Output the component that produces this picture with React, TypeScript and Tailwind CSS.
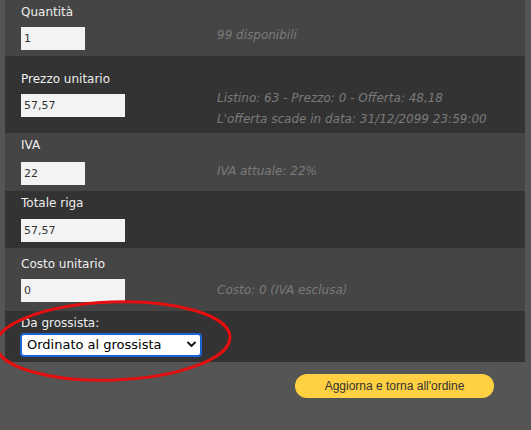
import { useState } from 'react';

type Row = {
  label: string;
  value: string;
  width: string;
  bg: string;
  pad: string;
  gap: string;
  notes?: string[];
  noteShift?: string;
};

const rows: Row[] = [
  { label: 'Quantità', value: '1', width: 'w-[64px]', bg: 'bg-[#454545]', pad: 'pt-[4px] pb-[6px]', gap: 'mt-[7px]', notes: ['99 disponibili'], noteShift: 'mb-[7px]' },
  {
    label: 'Prezzo unitario', value: '57,57', width: 'w-[104px]', bg: 'bg-[#333333]', pad: 'pt-[15px] pb-[16px]', gap: 'mt-[7px]',
    notes: ['Listino: 63 - Prezzo: 0 - Offerta: 48,18', "L'offerta scade in data: 31/12/2099 23:59:00"], noteShift: 'mt-[6px]',
  },
  { label: 'IVA', value: '22', width: 'w-[64px]', bg: 'bg-[#454545]', pad: 'pt-[4px] pb-[6px]', gap: 'mt-[9px]', notes: ['IVA attuale: 22%'], noteShift: 'mb-[5px]' },
  { label: 'Totale riga', value: '57,57', width: 'w-[104px]', bg: 'bg-[#333333]', pad: 'pt-[4px] pb-[6px]', gap: 'mt-[8px]' },
  { label: 'Costo unitario', value: '0', width: 'w-[104px]', bg: 'bg-[#454545]', pad: 'pt-[8px] pb-[9px]', gap: 'mt-[7px]', notes: ['Costo: 0 (IVA esclusa)'], noteShift: 'mb-[1px]' },
];

export default function App() {
  const [stato, setStato] = useState('ordinato');

  return (
    <div className="relative w-[531px] h-[430px] overflow-hidden bg-[#555555] font-['DejaVu_Sans',Verdana,sans-serif]">
      <div className="mx-[5px] w-[520px]">
        {rows.map((r) => (
          <div key={r.label} className={`${r.bg} ${r.pad} px-4`}>
            <div className="text-[12px] leading-[16px] text-[#eeeeee]">{r.label}</div>
            <div className={`flex items-center h-[23px] ${r.gap}`}>
              <div className="w-[196px] shrink-0">
                <input
                  defaultValue={r.value}
                  className={`block ${r.width} h-[23px] bg-[#f3f3f3] text-[#333] text-[11px] px-[3px] outline-none border-0`}
                />
              </div>
              {r.notes && (
                <div className={`${r.noteShift} shrink-0 italic text-[12px] leading-[21px] text-[#7a7a7a] whitespace-nowrap`}>
                  {r.notes.map((n) => (
                    <div key={n}>{n}</div>
                  ))}
                </div>
              )}
            </div>
          </div>
        ))}

        <div className="bg-[#333333] pt-[4px] pb-[5px] px-4">
          <div className="text-[12px] leading-[16px] text-[#eeeeee]">Da grossista:</div>
          <div className="relative mt-[2px] w-[182px] -ml-px">
            <select
              value={stato}
              onChange={(e) => setStato(e.target.value)}
              className="block appearance-none w-[182px] h-[24px] bg-white text-black text-[13px] leading-[20px] pl-[5px] pr-6 border-2 border-[#1b64d8] rounded-[4px] outline-none"
            >
              <option value="ordinato">Ordinato al grossista</option>
              <option value="no">Non ordinato</option>
            </select>
            <svg className="pointer-events-none absolute right-[6px] top-[8px]" width="9" height="7" viewBox="0 0 9 7">
              <path d="M1 1.5 L4.5 5 L8 1.5" fill="none" stroke="#111" strokeWidth="1.8" strokeLinecap="round" strokeLinejoin="round" />
            </svg>
          </div>
        </div>
      </div>

      <div className="pt-[12px] pl-[295px]">
        <button className="block w-[199px] h-[24px] rounded-full bg-[#ffd042] text-[#333] text-[12px] font-['Liberation_Sans',Arial,sans-serif]">
          Aggiorna e torna all'ordine
        </button>
      </div>

      <svg className="pointer-events-none absolute left-0 top-0" width="531" height="430">
        <ellipse cx="113" cy="341" rx="117" ry="39" fill="none" stroke="#e50f0f" strokeWidth="3" transform="rotate(-2 113 341)" />
      </svg>
    </div>
  );
}
